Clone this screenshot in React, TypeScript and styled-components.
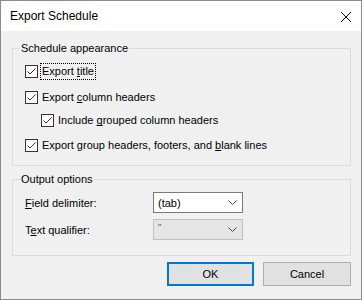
import { ReactElement } from 'react';
import styled, { createGlobalStyle } from 'styled-components';

const GlobalStyle = createGlobalStyle`
  html, body {
    margin: 0;
    padding: 0;
    background: #ffffff;
  }
  body {
    font-family: "Liberation Sans", Arial, sans-serif;
    font-size: 11px;
    color: #000;
  }
`;

const Window = styled.div`
  box-sizing: border-box;
  width: 362px;
  height: 300px;
  border: 1px solid #8c8c8c;
  background: #f0f0f0;
  display: flex;
  flex-direction: column;
`;

const TitleBar = styled.div`
  height: 30px;
  background: #ffffff;
  display: flex;
  align-items: center;
  justify-content: space-between;
  padding: 0 10px 0 9px;
  font-size: 12px;
`;

const CloseIcon = styled.svg`
  width: 10px;
  height: 10px;
  margin-top: 1px;
`;

const Body = styled.div`
  flex: 1;
  padding: 10px 10px 0 11px;
  display: flex;
  flex-direction: column;
`;

const Group = styled.fieldset<{ $height: number }>`
  margin: 0;
  height: ${({ $height }) => $height}px;
  box-sizing: border-box;
  border: 1px solid #dcdcdc;
  padding: 0 12px;
  & + & {
    margin-top: 6px;
  }
`;

const Legend = styled.legend`
  padding: 0 1px;
  margin-left: -5px;
  line-height: 14px;
`;

const CheckList = styled.div`
  display: flex;
  flex-direction: column;
  padding-top: 8px;
`;

const CheckRow = styled.div<{ $indent?: boolean; $gap: number }>`
  display: flex;
  align-items: center;
  height: 16px;
  margin-top: ${({ $gap }) => $gap}px;
  margin-left: ${({ $indent }) => ($indent ? 16 : 0)}px;
`;

const Box = styled.span`
  box-sizing: border-box;
  width: 13px;
  height: 13px;
  border: 1px solid #333;
  background: #fff;
  display: inline-flex;
  margin-right: 2px;
`;

const CheckText = styled.span<{ $focus?: boolean }>`
  padding: 1px 1px 2px;
  border: 1px dotted ${({ $focus }) => ($focus ? '#000' : 'transparent')};
  white-space: nowrap;
`;

const Key = styled.span`
  text-decoration: underline;
  text-decoration-skip-ink: none;
`;

const FieldGrid = styled.div`
  display: grid;
  grid-template-columns: 128px 90px;
  row-gap: 6px;
  align-items: center;
  padding-top: 6px;
`;

const FieldLabel = styled.span``;

const Combo = styled.div<{ $disabled?: boolean }>`
  box-sizing: border-box;
  height: 21px;
  display: flex;
  align-items: center;
  justify-content: space-between;
  padding: 0 5px 0 4px;
  border: 1px solid ${({ $disabled }) => ($disabled ? '#c0c0c0' : '#7a7a7a')};
  background: ${({ $disabled }) => ($disabled ? '#e5e5e5' : '#ffffff')};
  color: ${({ $disabled }) => ($disabled ? '#555' : '#000')};
`;

const ComboValue = styled.span<{ $small?: boolean }>`
  font-size: ${({ $small }) => ($small ? 9 : 11)}px;
  align-self: ${({ $small }) => ($small ? 'flex-start' : 'center')};
  margin-top: ${({ $small }) => ($small ? 2 : 0)}px;
`;

const Chevron = styled.svg`
  width: 9px;
  height: 5px;
`;

const ButtonRow = styled.div`
  display: flex;
  justify-content: flex-end;
  gap: 9px;
  margin-top: 6px;
`;

const DialogButton = styled.button<{ $default?: boolean }>`
  box-sizing: border-box;
  width: ${({ $default }) => ($default ? 87 : 88)}px;
  height: 24px;
  padding: 0;
  background: #e1e1e1;
  border: ${({ $default }) => ($default ? '2px solid #0078d7' : '1px solid #adadad')};
  font-family: "Liberation Sans", Arial, sans-serif;
  font-size: 11px;
  color: #000;
`;

function CheckBox({ label, focus, indent, gap }: {
  label: ReactElement;
  focus?: boolean;
  indent?: boolean;
  gap: number;
}): ReactElement {
  return (
    <CheckRow $indent={indent} $gap={gap}>
      <Box>
        <svg width="11" height="11" viewBox="0 0 11 11">
          <path d="M1.5 5.5 L4 8 L9.5 2.5" fill="none" stroke="#333" strokeWidth="1" />
        </svg>
      </Box>
      <CheckText $focus={focus}>{label}</CheckText>
    </CheckRow>
  );
}

function ChevronDown() {
  return (
    <Chevron viewBox="0 0 9 5">
      <path d="M0.5 0.5 L4.5 4.5 L8.5 0.5" fill="none" stroke="#444" strokeWidth="1" />
    </Chevron>
  );
}

export default function App(): ReactElement {
  return (
    <>
      <GlobalStyle />
      <Window>
        <TitleBar>
          <span>Export Schedule</span>
          <CloseIcon viewBox="0 0 10 10">
            <path d="M0 0 L10 10 M10 0 L0 10" stroke="#000" strokeWidth="1" />
          </CloseIcon>
        </TitleBar>
        <Body>
          <Group $height={125}>
            <Legend>Schedule appearance</Legend>
            <CheckList>
              <CheckBox gap={0} focus label={<>Export <Key>t</Key>itle</>} />
              <CheckBox gap={10} label={<>Export <Key>c</Key>olumn headers</>} />
              <CheckBox gap={7} indent label={<>Include <Key>g</Key>rouped column headers</>} />
              <CheckBox gap={9} label={<>Export group headers, footers, and <Key>b</Key>lank lines</>} />
            </CheckList>
          </Group>
          <Group $height={84}>
            <Legend>Output options</Legend>
            <FieldGrid>
              <FieldLabel><Key>F</Key>ield delimiter:</FieldLabel>
              <Combo>
                <ComboValue>(tab)</ComboValue>
                <ChevronDown />
              </Combo>
              <FieldLabel>T<Key>e</Key>xt qualifier:</FieldLabel>
              <Combo $disabled>
                <ComboValue $small>"</ComboValue>
                <ChevronDown />
              </Combo>
            </FieldGrid>
          </Group>
          <ButtonRow>
            <DialogButton $default>OK</DialogButton>
            <DialogButton>Cancel</DialogButton>
          </ButtonRow>
        </Body>
      </Window>
    </>
  );
}
